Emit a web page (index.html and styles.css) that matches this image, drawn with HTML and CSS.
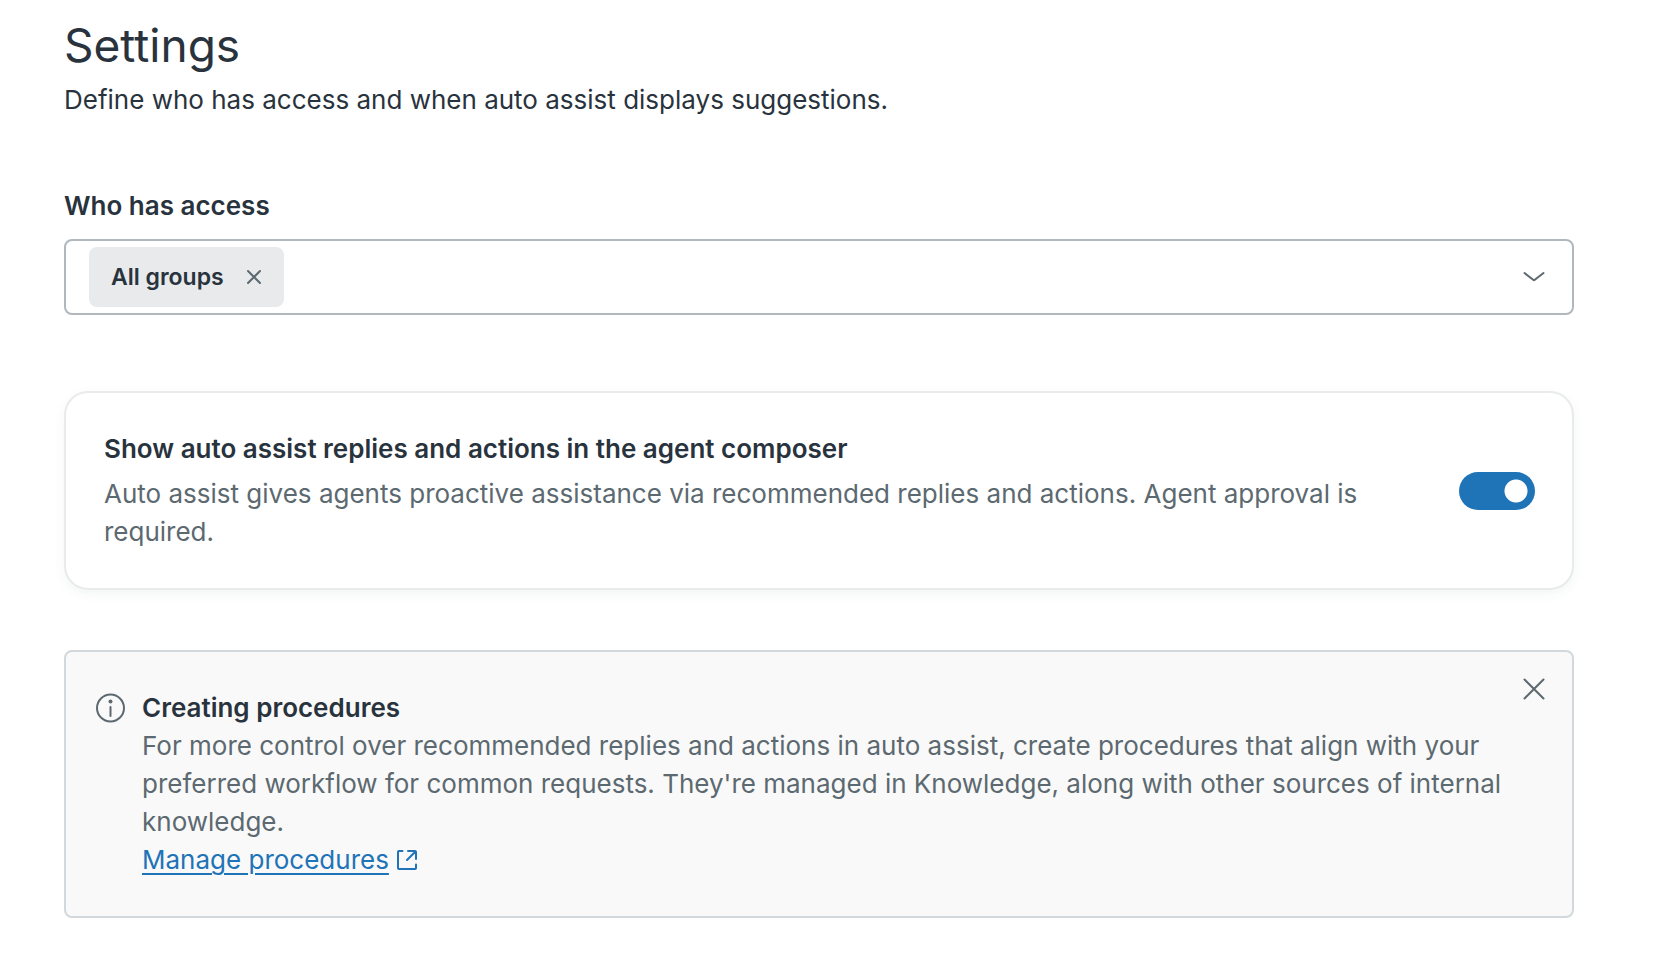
FILE: index.html
```html
<!DOCTYPE html>
<html lang="en">
<head>
  <meta charset="UTF-8">
  <meta name="viewport" content="width=device-width, initial-scale=1.0">
  <title>Settings</title>
  <link rel="stylesheet" href="styles.css">
</head>
<body>

  <main class="settings">
    <header class="page-header">
      <h1>Settings</h1>
      <p>Define who has access and when auto assist displays suggestions.</p>
    </header>

    <div class="field">
      <label for="groups">Who has access</label>
      <div class="combobox">
        <span class="tag">
          All groups
          <button type="button" class="icon-btn" aria-label="Remove All groups">
            <svg width="16" height="16" viewBox="0 0 16 16"><path d="M2 2l12 12M14 2L2 14"/></svg>
          </button>
        </span>
        <input type="text" id="groups" role="combobox" aria-expanded="false">
        <button type="button" class="icon-btn" aria-label="Open group list">
          <svg width="22" height="22" viewBox="0 0 22 22"><path d="M1.500 7l8.700 6.800a1.300 1.300 0 0 0 1.600 0L20.500 7"/></svg>
        </button>
      </div>
    </div>

    <section class="card">
      <div class="card-text">
        <label for="composer-toggle">Show auto assist replies and actions in the agent composer</label>
        <p id="composer-hint">Auto assist gives agents proactive assistance via recommended replies and actions. Agent approval is required.</p>
      </div>
      <input type="checkbox" role="switch" class="toggle" id="composer-toggle" aria-describedby="composer-hint" checked>
    </section>

    <section class="notice">
      <svg class="notice-icon" width="30" height="38" viewBox="0 0 30 38">
        <circle cx="14.500" cy="19" r="13.500"/>
        <path d="M14.500 18v9"/>
        <circle class="dot" cx="14.500" cy="12.500" r="2"/>
      </svg>
      <div class="notice-text">
        <h2>Creating procedures</h2>
        <p>For more control over recommended replies and actions in auto assist, create procedures that align with your preferred workflow for common requests. They're managed in Knowledge, along with other sources of internal knowledge.</p>
        <a href="#procedures"><span>Manage procedures</span>
          <svg width="20" height="20" viewBox="0 0 20 20"><path d="M5.500 1H2a1 1 0 0 0-1 1v16a1 1 0 0 0 1 1h16a1 1 0 0 0 1-1v-3.500M11 1h7a1 1 0 0 1 1 1v7M18.500 1.500l-8.500 8.500"/></svg>
        </a>
      </div>
      <button type="button" class="icon-btn notice-close" aria-label="Close">
        <svg width="22" height="22" viewBox="0 0 22 22"><path d="M1.500 1.500l19 19M20.500 1.500l-19 19"/></svg>
      </button>
    </section>
  </main>

</body>
</html>
```
FILE: styles.css
```css
* {
  box-sizing: border-box;
}

body {
  margin: 0;
  background-color: #fff;
  color: #29333d;
  font-family: Inter, "Liberation Sans", sans-serif;
  font-size: 26px;
  line-height: 38px;
}

h1, h2, p {
  margin: 0;
}

h2, label {
  font-size: 26px;
  font-weight: 600;
}

svg {
  display: block;
  fill: none;
  stroke: #5c6970;
  stroke-width: 2;
  stroke-linecap: round;
}

.settings {
  padding: 17px 106px 48px 64px;
}

.page-header h1 {
  margin-bottom: 8px;
  font-size: 46px;
  font-weight: 400;
  line-height: 56px;
}

/* Group picker */
.field {
  display: flex;
  flex-direction: column;
  gap: 14px;
  margin-top: 68px;
}

.combobox {
  display: flex;
  align-items: center;
  gap: 16px;
  padding: 6px 27px 6px 23px;
  border: 2px solid #b0b8be;
  border-radius: 8px;
}

.combobox input {
  flex: 1;
  min-width: 0;
  padding: 0;
  border: 0;
  outline: 0;
  background: none;
  color: inherit;
  font: inherit;
}

.tag {
  display: flex;
  align-items: center;
  gap: 22px;
  padding: 11px 22px;
  border-radius: 8px;
  background-color: #e8eaec;
  font-size: 23px;
  font-weight: 600;
}

.icon-btn {
  padding: 0;
  border: 0;
  background: none;
  cursor: pointer;
}

/* Composer setting */
.card {
  display: flex;
  align-items: center;
  gap: 40px;
  margin-top: 76px;
  padding: 37px;
  padding-left: 38px;
  border: 2px solid #e8eaec;
  border-radius: 24px;
  box-shadow: 0 4px 12px rgba(23, 73, 77, 0.05);
}

.card-text {
  flex: 1;
}

.card-text p {
  margin-top: 7px;
  color: #5c6970;
}

.toggle {
  appearance: none;
  flex: none;
  width: 76px;
  height: 38px;
  margin: 0;
  border-radius: 19px;
  background: radial-gradient(circle at 57px 19px, #fff 11px, #1f73b7 12px);
  cursor: pointer;
}

.toggle:not(:checked) {
  background: radial-gradient(circle at 19px 19px, #fff 11px, #848f99 12px);
}

/* Procedures notice */
.notice {
  display: flex;
  align-items: flex-start;
  margin-top: 60px;
  padding: 37px 27px 37px 30px;
  border: 2px solid #d3d8dc;
  border-radius: 8px;
  background-color: #f9f9f9;
}

.notice-icon .dot {
  fill: #5c6970;
  stroke: none;
}

.notice-text {
  flex: 1;
  margin: 0 16px;
}

.notice-text p {
  color: #5c6970;
}

.notice-text a {
  display: inline-flex;
  align-items: center;
  gap: 8px;
  color: #1f73b7;
  text-decoration: none;
  vertical-align: top;
}

.notice-text a span {
  text-decoration: underline;
  text-decoration-thickness: 2px;
  text-underline-offset: 4px;
}

.notice-text a svg {
  stroke: #1f73b7;
}

.notice-close {
  margin-top: -11px;
}
```
